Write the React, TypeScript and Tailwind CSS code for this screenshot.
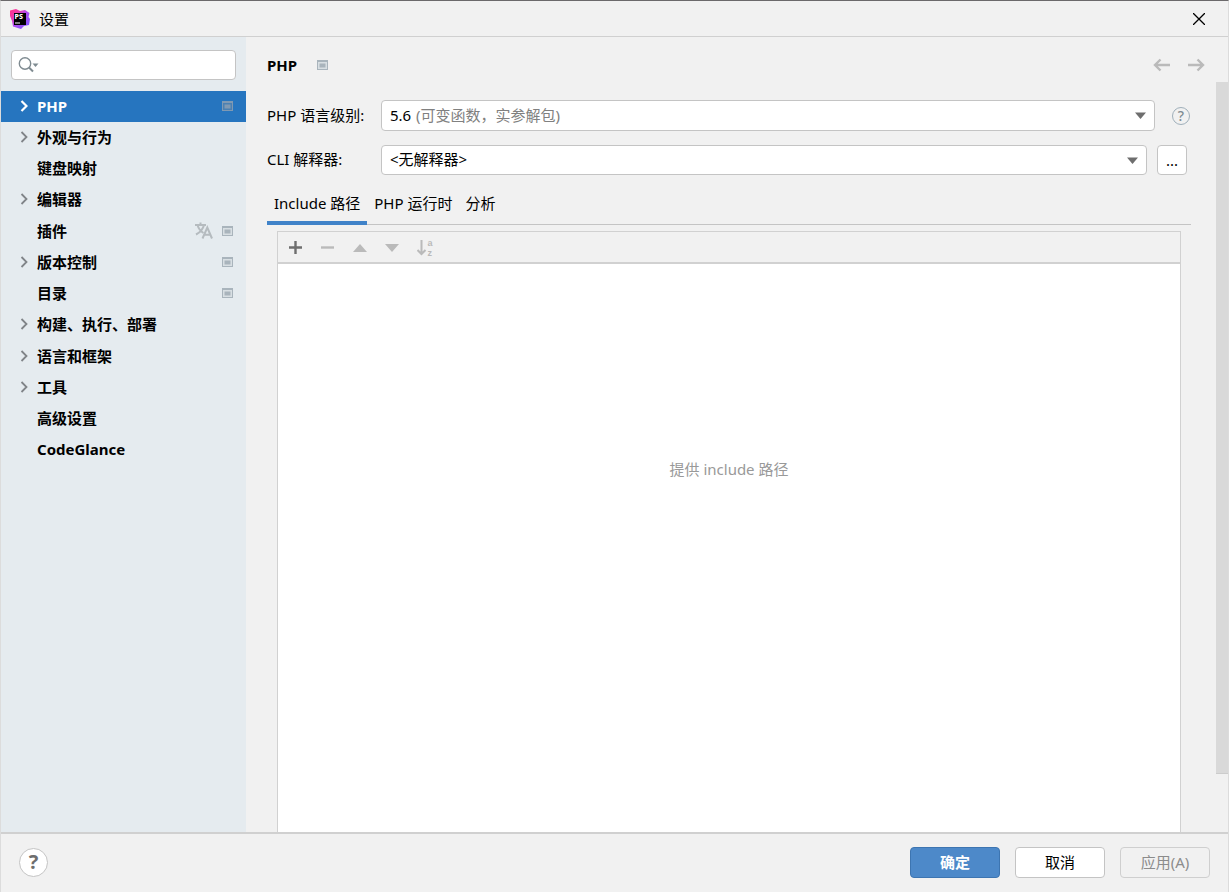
import React from 'react';

const menu = [
  { name: 'PHP', arrow: true, project: true, active: true },
  { name: '外观与行为', arrow: true },
  { name: '键盘映射' },
  { name: '编辑器', arrow: true },
  { name: '插件', translate: true, project: true },
  { name: '版本控制', arrow: true, project: true },
  { name: '目录', project: true },
  { name: '构建、执行、部署', arrow: true },
  { name: '语言和框架', arrow: true },
  { name: '工具', arrow: true },
  { name: '高级设置' },
  { name: 'CodeGlance' },
];

const Logo = () => (
  <svg width="20" height="20" viewBox="0 0 20 20" aria-hidden="true">
    <defs>
      <linearGradient id="ps" x1="0" y1="0" x2="1" y2="1">
        <stop offset="0" stopColor="#ff318c" />
        <stop offset="0.25" stopColor="#f03aa8" />
        <stop offset="0.5" stopColor="#b04cf0" />
        <stop offset="1" stopColor="#7256ff" />
      </linearGradient>
    </defs>
    <path d="M0 1.500L6 0L10 2L15 1L19.500 4L18.500 8L20 10L19 16L14 17L11 20L3 17.500L2 12L0 7Z" fill="url(#ps)" />
    <rect x="4" y="4" width="12" height="12" fill="#000" />
    <text x="4.500" y="10" fontSize="7" fontWeight="800" fill="#fff">PS</text>
    <rect x="5" y="13.500" width="5" height="1" fill="#fff" />
  </svg>
);

const ProjectIcon = ({ active = false }: { active?: boolean }) => (
  <svg width="11" height="10" viewBox="0 0 11 10" className={active ? 'text-[#7f99b3]' : 'text-[#a9b4bc]'} aria-hidden="true">
    <path d="M0 0H11V10H0Z M1 2V9H10V2Z" fillRule="evenodd" fill="currentColor" />
    <rect x="1" y="2" width="9" height="7" fill={active ? '#4b80b2' : '#d8dfe3'} />
    <rect x="2.500" y="3.500" width="6" height="4" fill="currentColor" />
  </svg>
);

const TranslateIcon = () => (
  <svg width="18" height="17" viewBox="0 0 18 17" fill="none" stroke="#b5bbbf" strokeWidth="2" aria-hidden="true">
    <path d="M0 3H11M5.500 0.500V3M2.500 3C3.500 6.500 6 9.500 8.500 11M9 3C8 7 5 10.500 1 12.500" />
    <path d="M7.500 16.500L12.300 5.500L17 16.500M9.500 12.800H15" />
  </svg>
);

const Triangle = ({ up = false }: { up?: boolean }) => (
  <svg width="14" height="8" viewBox="0 0 14 8" aria-hidden="true">
    <path d={up ? 'M0 8L7 0L14 8Z' : 'M0 0H14L7 8Z'} fill="currentColor" />
  </svg>
);

const SelectArrow = () => (
  <svg width="11" height="7" viewBox="0 0 11 7" className="pointer-events-none absolute right-[9px] top-3 text-[#6e6e6e]" aria-hidden="true">
    <path d="M0 0.500H11L5.500 7Z" fill="currentColor" />
  </svg>
);

const Arrow = ({ right = false }: { right?: boolean }) => (
  <svg width="18" height="14" viewBox="0 0 18 14" fill="none" stroke="#bababa" strokeWidth="2.400" aria-hidden="true">
    <path d={right ? 'M1 7H16M10.500 1.500L16 7L10.500 12.500' : 'M17 7H2M7.500 1.500L2 7L7.500 12.500'} />
  </svg>
);

const Sidebar = () => (
  <nav className="w-[245px] shrink-0 bg-[#e5ebef] pt-[13px]">
    <div className="relative mx-[10px]">
      <input
        type="text"
        aria-label="搜索"
        className="block h-[30px] w-full rounded-[4px] border border-[#c4c4c4] bg-white pl-8 pr-2 outline-none"
      />
      <svg width="21" height="16" viewBox="0 0 21 16" fill="none" className="pointer-events-none absolute left-[7px] top-[7px]" aria-hidden="true">
        <circle cx="7" cy="6.500" r="5.700" stroke="#7f8b91" strokeWidth="1.400" />
        <path d="M11 10.500L15 14.500" stroke="#7f8b91" strokeWidth="2" />
        <path d="M14.500 6.500H20.500L17.500 10Z" fill="#7f8b91" />
      </svg>
    </div>
    <ul className="mt-[11px] grid h-[375px] grid-rows-12 font-bold">
      {menu.map(item => (
        <li key={item.name}>
          <a
            href="#"
            className={item.active
              ? 'flex h-full items-center bg-[#2675bf] pb-[2px] pl-[19px] pr-[13px] text-white'
              : 'flex h-full items-center pb-[2px] pl-[19px] pr-[13px] text-black'}
          >
            <span className="w-[17px]">
              {item.arrow && (
                <svg width="8" height="12" viewBox="0 0 8 12" fill="none" stroke={item.active ? '#fff' : '#808488'} strokeWidth={item.active ? 2.2 : 1.8} aria-hidden="true">
                  <path d="M1.500 1L6.500 6L1.500 11" />
                </svg>
              )}
            </span>
            <span className="flex-1">{item.name}</span>
            {item.translate && <span className="mr-[9px]"><TranslateIcon /></span>}
            {item.project && <ProjectIcon active={item.active} />}
          </a>
        </li>
      ))}
    </ul>
  </nav>
);

const selectClass = 'block w-full appearance-none rounded-[4px] border border-[#c4c4c4] bg-white px-2 pb-[2px] outline-none';

export default function App() {
  return (
    <div className="flex h-screen flex-col overflow-hidden border-x border-t border-x-[#dcdcdc] border-t-[#6b696b] bg-[#f1f1f1] font-['Noto_Sans','Noto_Sans_CJK_SC',sans-serif] text-[15px] leading-5 text-black">
      <header className="flex h-9 shrink-0 items-center border-b border-[#d0d0d0] pl-[9px] pr-[23px]">
        <Logo />
        <h1 className="ml-[9px] flex-1">设置</h1>
        <button type="button" aria-label="关闭">
          <svg width="12" height="12" viewBox="0 0 12 12" stroke="#000" strokeWidth="1.300" aria-hidden="true">
            <path d="M0 0L12 12M12 0L0 12" />
          </svg>
        </button>
      </header>

      <div className="flex min-h-0 flex-1">
        <Sidebar />

        <main className="flex min-w-0 flex-1 flex-col pl-[21px]">
          <div className="flex h-[63px] shrink-0 items-center pb-2 pr-[11px]">
            <h2 className="font-bold">PHP</h2>
            <span className="ml-5 flex-1"><ProjectIcon /></span>
            <button type="button" aria-label="后退"><Arrow /></button>
            <button type="button" aria-label="前进" className="ml-4"><Arrow right /></button>
          </div>

          <div className="flex shrink-0 items-center pr-[26px]">
            <label htmlFor="level" className="w-[114px] pb-[2px]">PHP 语言级别:</label>
            <div className="relative flex-1">
              <select id="level" className={`${selectClass} h-[31px]`}>
                <option>5.6</option>
              </select>
              <span className="pointer-events-none absolute left-[35px] top-[5px] text-[#808080]">(可变函数，实参解包)</span>
              <SelectArrow />
            </div>
            <button type="button" aria-label="帮助" className="ml-[17px] flex size-[18px] items-center justify-center rounded-full border border-[#9fafba] text-sm font-medium text-[#7f8b91]">?</button>
          </div>

          <div className="mt-[14px] flex shrink-0 items-center pr-[29px]">
            <label htmlFor="cli" className="w-[114px] pb-[2px]">CLI 解释器:</label>
            <div className="relative flex-1">
              <select id="cli" className={`${selectClass} h-[30px]`}>
                <option>&lt;无解释器&gt;</option>
              </select>
              <SelectArrow />
            </div>
            <button type="button" className="ml-[10px] h-[30px] w-[30px] rounded-[4px] border border-[#c4c4c4] bg-white">...</button>
          </div>

          <div role="tablist" className="mr-[25px] mt-2 flex h-[42px] shrink-0 border-b border-[#c4c4c4]">
            <button type="button" role="tab" aria-selected="true" className="-mb-px border-b-4 border-[#4083c9] px-[7px] pt-[2px]">Include 路径</button>
            <button type="button" role="tab" aria-selected="false" className="px-[7px] pb-px">PHP 运行时</button>
            <button type="button" role="tab" aria-selected="false" className="px-[6px] pb-px">分析</button>
          </div>

          <section className="ml-[10px] mr-[35px] mt-[6px] flex min-h-0 flex-1 flex-col border-x border-t border-[#d1d1d1]">
            <div className="flex h-8 shrink-0 items-center border-b-2 border-[#d1d1d1] pl-[11px] pt-px text-[#bababa]">
              <button type="button" aria-label="添加">
                <svg width="13" height="13" viewBox="0 0 13 13" stroke="#6e6e6e" strokeWidth="2.400" aria-hidden="true">
                  <path d="M0 6.500H13M6.500 0V13" />
                </svg>
              </button>
              <button type="button" aria-label="移除" className="ml-[19px]">
                <svg width="13" height="13" viewBox="0 0 13 13" stroke="currentColor" strokeWidth="2.400" aria-hidden="true">
                  <path d="M0 6.500H13" />
                </svg>
              </button>
              <button type="button" aria-label="上移" className="ml-[19px]"><Triangle up /></button>
              <button type="button" aria-label="下移" className="ml-[18px]"><Triangle /></button>
              <button type="button" aria-label="排序" className="ml-[18px]">
                <svg width="18" height="24" viewBox="0 0 18 24" fill="none" stroke="currentColor" strokeWidth="2" aria-hidden="true">
                  <path d="M4.500 4V18M0.500 14L4.500 18L8.500 14" />
                  <g fontFamily="Liberation Sans" fontSize="9" fontWeight="700" stroke="none" fill="currentColor">
                    <text x="10.500" y="9.500">a</text>
                    <text x="10.500" y="19.500">z</text>
                  </g>
                </svg>
              </button>
            </div>
            <div className="flex-1 bg-white pt-[195px] text-center text-[#999999]">提供 include 路径</div>
          </section>
        </main>

        <div className="mb-[58px] mt-[45px] w-3 shrink-0 border-b border-[#cccccc] bg-[#d9d9d9]" />
      </div>

      <footer className="flex h-[60px] shrink-0 items-center gap-[15px] border-t-2 border-[#d0d0d0] px-[18px] pb-[2px]">
        <button type="button" aria-label="帮助" className="flex size-[29px] items-center justify-center rounded-full border border-[#c4c4c4] bg-white text-xl font-bold text-[#6e6e6e]">?</button>
        <button type="button" className="ml-auto h-[31px] w-[90px] rounded-[4px] border border-[#3d75b1] bg-[#4d89c9] font-bold text-white">确定</button>
        <button type="button" className="h-[31px] w-[90px] rounded-[4px] border border-[#c4c4c4] bg-white">取消</button>
        <button type="button" disabled className="h-[31px] w-[90px] rounded-[4px] border border-[#cfcfcf] text-[#8c8c8c]">应用(A)</button>
      </footer>
    </div>
  );
}
